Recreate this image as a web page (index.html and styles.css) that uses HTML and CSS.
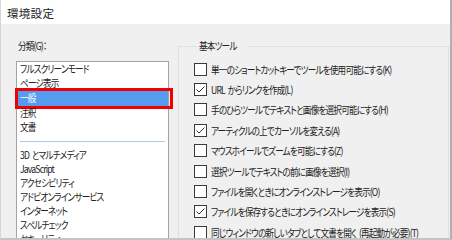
FILE: index.html
```html
<!DOCTYPE html>
<html lang="ja">
<head>
<meta charset="utf-8">
<link rel="stylesheet" href="styles.css">
</head>
<body>
<div class="window">
  <div class="titlebar">環境設定</div>
  <div class="content">
    <div class="left">
      <div class="label"><span class="t">分類(G)：</span></div>
      <div class="listbox">
        <div class="item"><span class="t">フルスクリーンモード</span></div>
        <div class="item"><span class="t">ページ表示</span></div>
        <div class="item selected"><span class="t">一般</span></div>
        <div class="item"><span class="t">注釈</span></div>
        <div class="item"><span class="t">文書</span></div>
        <div class="sep"></div>
        <div class="item"><span class="t">3D とマルチメディア</span></div>
        <div class="item"><span class="t">JavaScript</span></div>
        <div class="item"><span class="t">アクセシビリティ</span></div>
        <div class="item"><span class="t">アドビオンラインサービス</span></div>
        <div class="item"><span class="t">インターネット</span></div>
        <div class="item"><span class="t">スペルチェック</span></div>
        <div class="item"><span class="t">セキュリティ</span></div>
      </div>
    </div>
    <fieldset class="group">
      <legend><span class="t">基本ツール</span></legend>
      <div class="row"><span class="box"></span><span class="t">単一のショートカットキーでツールを使用可能にする(K)</span></div>
      <div class="row"><span class="box"><svg viewBox="0 0 13 13" width="13" height="13"><polyline points="2.5,6.5 5,9 10.5,3.5" fill="none" stroke="#333" stroke-width="1"/></svg></span><span class="t">URL からリンクを作成(L)</span></div>
      <div class="row"><span class="box"></span><span class="t">手のひらツールでテキストと画像を選択可能にする(H)</span></div>
      <div class="row"><span class="box"><svg viewBox="0 0 13 13" width="13" height="13"><polyline points="2.5,6.5 5,9 10.5,3.5" fill="none" stroke="#333" stroke-width="1"/></svg></span><span class="t">アーティクルの上でカーソルを変える(A)</span></div>
      <div class="row"><span class="box"></span><span class="t">マウスホイールでズームを可能にする(Z)</span></div>
      <div class="row"><span class="box"></span><span class="t">選択ツールでテキストの前に画像を選択(I)</span></div>
      <div class="row"><span class="box"></span><span class="t">ファイルを開くときにオンラインストレージを表示(O)</span></div>
      <div class="row"><span class="box"><svg viewBox="0 0 13 13" width="13" height="13"><polyline points="2.5,6.5 5,9 10.5,3.5" fill="none" stroke="#333" stroke-width="1"/></svg></span><span class="t">ファイルを保存するときにオンラインストレージを表示(S)</span></div>
      <div class="row"><span class="box"></span><span class="t">同じウィンドウの新しいタブとして文書を開く (再起動が必要)(T)</span></div>
    </fieldset>
  </div>
</div>
</body>
</html>
```
FILE: styles.css
```css
* { box-sizing: border-box; }
html, body { margin: 0; padding: 0; }
body {
  font-family: "Noto Sans CJK JP", "Noto Sans", sans-serif;
  font-feature-settings: "palt";
  font-size: 10.5px;
  color: #222222;
  background: #f0f0f0;
}
.window {
  width: 452px;
  height: 240px;
  overflow: hidden;
  background: #f0f0f0;
  border-left: 1px solid #d6d6d6;
  border-right: 2px solid #b0b0b0;
  border-bottom: 2px solid #c4c4c4;
  display: flex;
  flex-direction: column;
}
.titlebar {
  height: 24px;
  flex: none;
  background: #ffffff;
  padding-left: 6px;
  line-height: 26px;
  font-size: 11.5px;
  letter-spacing: 0.3px;
}
.t {
  display: inline-block;
  white-space: nowrap;
  letter-spacing: -1px;
  word-spacing: 2px;
  transform: scaleX(0.82);
  transform-origin: left center;
}
.content {
  display: flex;
  padding: 15px 1px 0 15px;
  gap: 9px;
  flex: 1;
  min-height: 0;
}
.left {
  width: 153px;
  flex: none;
  display: flex;
  flex-direction: column;
}
.label {
  height: 14px;
  line-height: 14px;
  padding-left: 2px;
  margin-bottom: 8px;
}
.listbox {
  background: #ffffff;
  border: 1px solid #a3a3a3;
  flex: 1;
}
.item {
  height: 14px;
  line-height: 14px;
  padding-left: 3px;
  white-space: nowrap;
  position: relative;
}
.item.selected {
  background: #559bef;
  color: #ffffff;
  height: 15px;
  margin-top: 1px;
}
.item.selected::after {
  content: "";
  position: absolute;
  left: -2px;
  right: -5px;
  top: -3px;
  bottom: -3px;
  border: 3px solid #f20000;
}
.sep {
  height: 14px;
  margin: 0 3px;
  position: relative;
}
.sep::before {
  content: "";
  position: absolute;
  left: 0;
  right: 0;
  top: 7px;
  border-top: 1px solid #a9c9f1;
}
.group {
  flex: 1;
  margin: 0;
  padding: 6px 0 0 15px;
  border: 1px solid #e0e0e0;
  border-bottom: none;
  min-width: 0;
}
.group legend {
  padding: 0 2px;
  margin-left: 3px;
  height: 14px;
  line-height: 14px;
}
.row {
  height: 20.4px;
  display: flex;
  align-items: center;
  gap: 4px;
  white-space: nowrap;
}
.box {
  width: 13px;
  height: 13px;
  flex: none;
  border: 1px solid #3a3a3a;
  background: #ffffff;
  position: relative;
}
.box svg {
  position: absolute;
  left: -1px;
  top: -1px;
}
```
